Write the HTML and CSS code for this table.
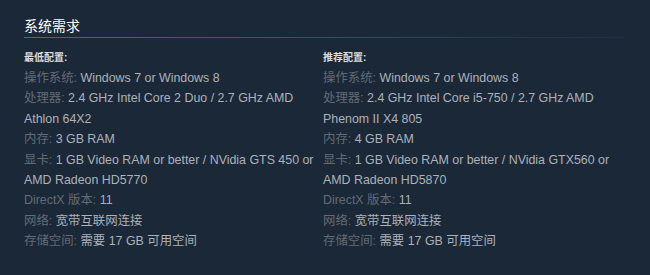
FILE: index.html
```html
<!DOCTYPE html>
<html lang="zh-CN">
<head>
<meta charset="utf-8">
<link rel="stylesheet" href="styles.css">
</head>
<body>
<div class="sysreq">
  <h2 class="title">系统需求</h2>
  <div class="cols">
    <div class="col">
      <div class="head">最低配置:</div>
      <ul class="list">
        <li><span class="lbl">操作系统:</span> Windows 7 or Windows 8</li>
        <li><span class="lbl">处理器:</span> 2.4 GHz Intel Core 2 Duo / 2.7 GHz AMD Athlon 64X2</li>
        <li><span class="lbl">内存:</span> 3 GB RAM</li>
        <li><span class="lbl">显卡:</span> 1 GB Video RAM or better / NVidia GTS 450 or AMD Radeon HD5770</li>
        <li><span class="lbl">DirectX 版本:</span> 11</li>
        <li><span class="lbl">网络:</span> 宽带互联网连接</li>
        <li><span class="lbl">存储空间:</span> 需要 17 GB 可用空间</li>
      </ul>
    </div>
    <div class="col">
      <div class="head">推荐配置:</div>
      <ul class="list">
        <li><span class="lbl">操作系统:</span> Windows 7 or Windows 8</li>
        <li><span class="lbl">处理器:</span> 2.4 GHz Intel Core i5-750 / 2.7 GHz AMD Phenom II X4 805</li>
        <li><span class="lbl">内存:</span> 4 GB RAM</li>
        <li><span class="lbl">显卡:</span> 1 GB Video RAM or better / NVidia GTX560 or AMD Radeon HD5870</li>
        <li><span class="lbl">DirectX 版本:</span> 11</li>
        <li><span class="lbl">网络:</span> 宽带互联网连接</li>
        <li><span class="lbl">存储空间:</span> 需要 17 GB 可用空间</li>
      </ul>
    </div>
  </div>
</div>
</body>
</html>
```
FILE: styles.css
```css
html, body {
  margin: 0;
  padding: 0;
  background: #1b2838;
  height: 100%;
}
body {
  font-family: "Liberation Sans", "Noto Sans CJK SC", Arial, sans-serif;
}
.sysreq {
  padding: 16px 24px 0 24px;
  width: 602px;
}
.title {
  margin: 0;
  font-size: 14px;
  font-weight: normal;
  line-height: 20px;
  color: #ffffff;
  padding-bottom: 2px;
  border-bottom: 1px solid transparent;
  background-image: linear-gradient(to right, #3a6e92 0%, #2f5873 40%, rgba(40, 80, 110, 0.15) 100%);
  background-size: 100% 1px;
  background-position: left bottom;
  background-repeat: no-repeat;
}
.cols {
  display: grid;
  grid-template-columns: 296px 300px;
  column-gap: 3px;
  margin-top: 12px;
}
.head {
  font-size: 10px;
  font-weight: bold;
  color: #dcdedf;
  line-height: 14px;
  margin-bottom: 3px;
}
.list {
  list-style: none;
  margin: 0;
  padding: 0;
}
.list li {
  font-size: 12.4px;
  line-height: 20.4px;
  color: #acb2b8;
}
.lbl {
  color: #626b75;
}
```
